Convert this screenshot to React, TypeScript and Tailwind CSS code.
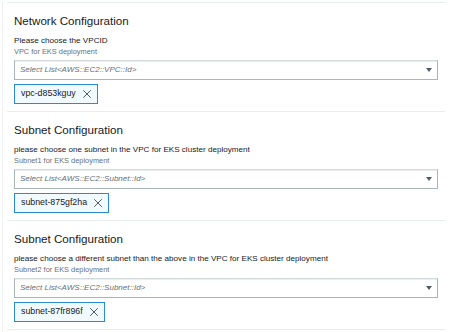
import { ReactNode } from "react";

// Parameter groups shown in the stack form
const SECTIONS = [
  {
    title: "Network Configuration",
    label: "Please choose the VPCID",
    hint: "VPC for EKS deployment",
    placeholder: "Select List<AWS::EC2::VPC::Id>",
    value: "vpc-d853kguy",
  },
  {
    title: "Subnet Configuration",
    label: "please choose one subnet in the VPC for EKS cluster deployment",
    hint: "Subnet1 for EKS deployment",
    placeholder: "Select List<AWS::EC2::Subnet::Id>",
    value: "subnet-875gf2ha",
  },
  {
    title: "Subnet Configuration",
    label: "please choose a different subnet than the above in the VPC for EKS cluster deployment",
    hint: "Subnet2 for EKS deployment",
    placeholder: "Select List<AWS::EC2::Subnet::Id>",
    value: "subnet-87fr896f",
  },
];

function CloseIcon({ className }: { className?: string }) {
  return (
    <svg className={className} viewBox="0 0 8 8" fill="none" stroke="currentColor" strokeWidth="1" strokeLinecap="round">
      <path d="M0.5 0.5 L7.5 7.5 M7.5 0.5 L0.5 7.5" />
    </svg>
  );
}

function Caret({ className }: { className?: string }) {
  return (
    <svg className={className} viewBox="0 0 6 4" fill="currentColor">
      <path d="M0 0 H6 L3 4 Z" />
    </svg>
  );
}

function Token({ children }: { children: ReactNode }) {
  return (
    <div className="mt-[4px] inline-flex h-[20px] items-center gap-[7px] border border-[#2a8bd0] bg-[#f1faff] pl-[6px] pr-[6px] text-[8.8px] text-[#16191f]">
      <span>{children}</span>
      <CloseIcon className="h-[8px] w-[8px] text-[#545b64]" />
    </div>
  );
}

export default function App() {
  return (
    <div className="h-[332px] w-[451px] overflow-hidden bg-white pt-[2px] font-['Liberation_Sans',Arial,sans-serif]">
      <div className="ml-[2px] h-full border-l border-[#f0f1f1] pl-[4px]">
        {SECTIONS.map((s, i) => (
          <section key={i} className="flex w-[438px] flex-col items-start border-t border-[#eaeded] pb-[7px] pl-[7px] pr-[7px] pt-[10px]">
            <h2 className="text-[11.6px] leading-[15px] text-[#16191f]">{s.title}</h2>
            <div className="mt-[7px] text-[8.1px] leading-[11px] text-[#16191f]">{s.label}</div>
            <div className="mt-[1px] text-[7.4px] leading-[10px] text-[#687078]">{s.hint}</div>
            <div className="mt-[3px] flex h-[20px] w-full items-center justify-between border border-[#aab7b8] border-t-[#d5dbdb] pl-[5px] pr-[5px] shadow-[inset_0_1px_0_#eaeded]">
              <span className="text-[8px] italic text-[#687078]">{s.placeholder}</span>
              <Caret className="h-[4px] w-[6px] text-[#545b64]" />
            </div>
            <Token>{s.value}</Token>
          </section>
        ))}
        <div className="w-[438px] border-t border-[#eaeded]" />
      </div>
    </div>
  );
}
